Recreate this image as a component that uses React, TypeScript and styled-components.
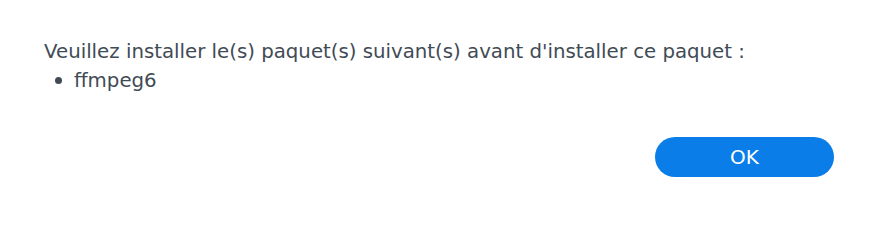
import styled, { createGlobalStyle } from 'styled-components';

const GlobalStyle = createGlobalStyle`
	html, body {
		margin: 0;
		padding: 0;
		background: #ffffff;
	}
`;

const Dialog = styled.div`
	box-sizing: border-box;
	width: 876px;
	height: 205px;
	background: #ffffff;
	display: flex;
	flex-direction: column;
	justify-content: space-between;
	padding: 37px 42px 28px 44px;
	font-family: 'DejaVu Sans', Verdana, sans-serif;
	color: #414b55;
`;

const Message = styled.div`
	font-size: 19.75px;
	line-height: 29px;
`;

const List = styled.ul`
	margin: 0;
	padding: 0 0 0 11px;
	list-style: none;
`;

const Item = styled.li`
	display: flex;
	align-items: center;
	gap: 12px;

	&::before {
		content: '';
		width: 7px;
		height: 7px;
		border-radius: 50%;
		background: #414b55;
	}
`;

const Footer = styled.div`
	display: flex;
	justify-content: flex-end;
`;

const Button = styled.button`
	width: 179px;
	height: 40px;
	border: none;
	border-radius: 20px;
	background: #0a7de8;
	color: #ffffff;
	font-family: 'DejaVu Sans', Verdana, sans-serif;
	font-size: 20px;
	padding: 0;
	cursor: pointer;
`;

const App = () => {
	const packages = ['ffmpeg6'];

	return (
		<>
			<GlobalStyle />
			<Dialog>
				<Message>
					<div>Veuillez installer le(s) paquet(s) suivant(s) avant d'installer ce paquet :</div>
					<List>
						{packages.map((p) => (
							<Item key={p}>{p}</Item>
						))}
					</List>
				</Message>
				<Footer>
					<Button>OK</Button>
				</Footer>
			</Dialog>
		</>
	);
};

export default App;
